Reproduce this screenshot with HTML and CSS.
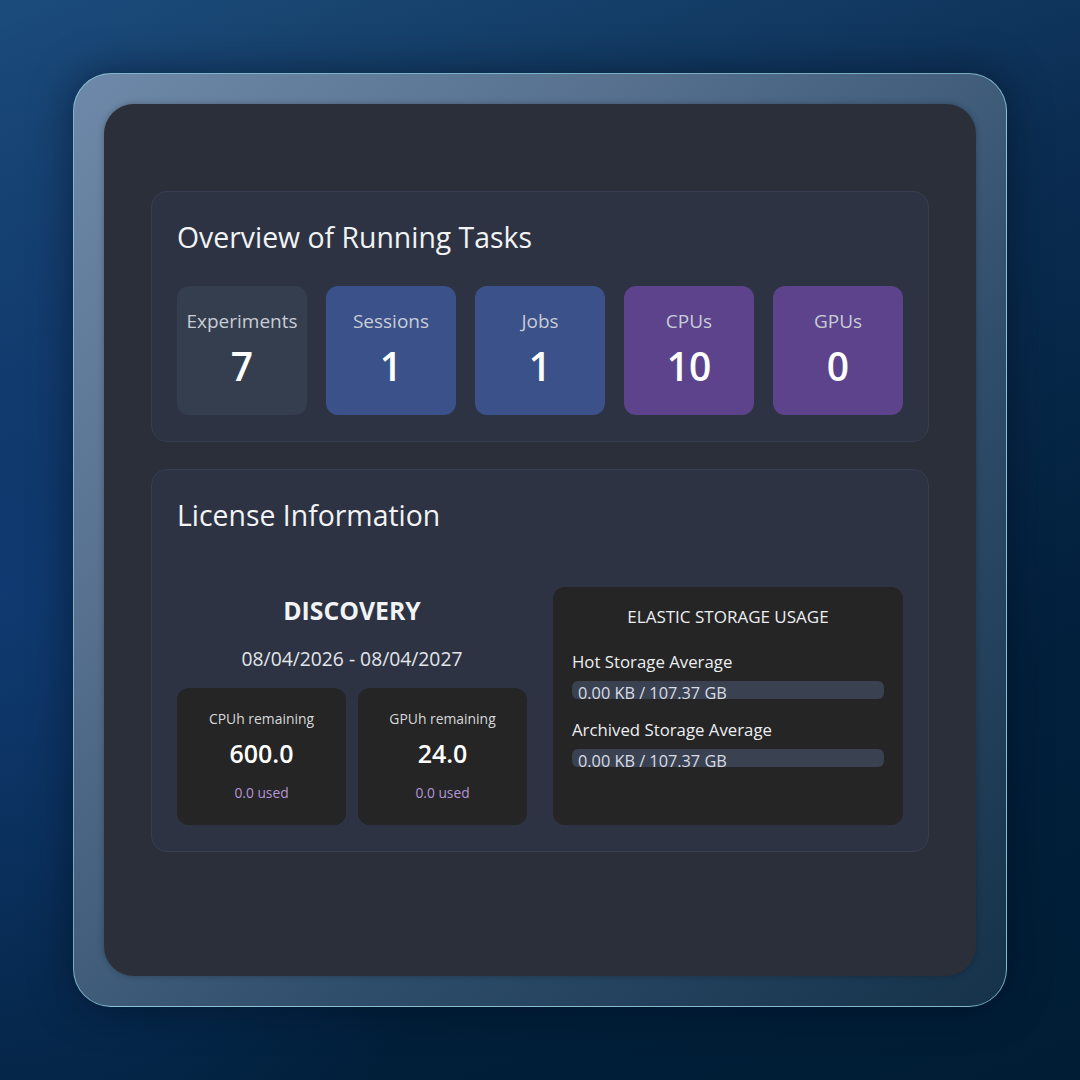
FILE: index.html
```html
<!DOCTYPE html>
<html lang="en">
<head>
  <meta charset="UTF-8">
  <meta name="viewport" content="width=device-width, initial-scale=1.0">
  <title>Dashboard</title>
  <link rel="stylesheet" href="styles.css">
</head>
<body>
  <div class="stage">
    <div class="frame">
      <div class="panel">

        <!-- Tareas en curso -->
        <section class="card">
          <h2 class="card-title">Overview of Running Tasks</h2>
          <div class="tiles">
            <div class="tile tile-gray">
              <span class="tile-label">Experiments</span>
              <span class="tile-value">7</span>
            </div>
            <div class="tile tile-blue">
              <span class="tile-label">Sessions</span>
              <span class="tile-value">1</span>
            </div>
            <div class="tile tile-blue">
              <span class="tile-label">Jobs</span>
              <span class="tile-value">1</span>
            </div>
            <div class="tile tile-purple">
              <span class="tile-label">CPUs</span>
              <span class="tile-value">10</span>
            </div>
            <div class="tile tile-purple">
              <span class="tile-label">GPUs</span>
              <span class="tile-value">0</span>
            </div>
          </div>
        </section>

        <!-- Licencia -->
        <section class="card">
          <h2 class="card-title">License Information</h2>
          <div class="license">
            <div class="plan">
              <h3 class="plan-name">DISCOVERY</h3>
              <p class="plan-dates">08/04/2026 - 08/04/2027</p>
              <div class="quotas">
                <div class="quota">
                  <span class="quota-label">CPUh remaining</span>
                  <span class="quota-value">600.0</span>
                  <span class="quota-used">0.0 used</span>
                </div>
                <div class="quota">
                  <span class="quota-label">GPUh remaining</span>
                  <span class="quota-value">24.0</span>
                  <span class="quota-used">0.0 used</span>
                </div>
              </div>
            </div>
            <div class="storage">
              <h4 class="storage-title">ELASTIC STORAGE USAGE</h4>
              <div class="storage-label">Hot Storage Average</div>
              <div class="bar">0.00 KB / 107.37 GB</div>
              <div class="storage-label">Archived Storage Average</div>
              <div class="bar">0.00 KB / 107.37 GB</div>
            </div>
          </div>
        </section>

      </div>
    </div>
  </div>
</body>
</html>
```

FILE: styles.css
```css
body {
  margin: 0;
  padding: 0;
  font-family: "Open Sans", "Noto Sans", sans-serif;
  color: #e9ebef;
}

.stage {
  width: 1080px;
  height: 1080px;
  display: flex;
  align-items: center;
  justify-content: center;
  background:
    radial-gradient(ellipse 520px 700px at 0% 55%, rgba(20, 70, 140, 0.55), rgba(20, 70, 140, 0) 100%),
    linear-gradient(160deg, #1c4c7a 0%, #0b2d52 35%, #02203c 70%, #001d35 100%);
}

.frame {
  width: 934px;
  height: 934px;
  box-sizing: border-box;
  padding: 30px;
  border-radius: 38px;
  border: 1.5px solid rgba(150, 215, 230, 0.75);
  background: linear-gradient(135deg, #6e89a9 0%, #56708e 30%, #2e4d6a 65%, #15324a 100%);
  box-shadow: 0 0 40px rgba(0, 10, 25, 0.5);
}

.panel {
  height: 100%;
  box-sizing: border-box;
  padding: 87px 47px;
  border-radius: 30px;
  background: #2a2f3a;
  box-shadow: 0 0 6px rgba(0, 0, 0, 0.25);
  display: flex;
  flex-direction: column;
  gap: 27px;
}

.card {
  background: #2d3343;
  border: 1px solid #373e50;
  border-radius: 16px;
  padding: 27px 25px 26px;
}

.card-title {
  margin: 0;
  font-size: 28.4px;
  font-weight: 500;
  line-height: 36px;
  color: #f2f3f5;
}

.tiles {
  margin-top: 31px;
  display: grid;
  grid-template-columns: repeat(5, 1fr);
  gap: 19px;
}

.tile {
  height: 129px;
  border-radius: 12px;
  display: flex;
  flex-direction: column;
  align-items: center;
  padding-top: 22px;
  box-sizing: border-box;
}

.tile-gray { background: #343e4f; }
.tile-blue { background: #3a5189; }
.tile-purple { background: #5c438b; }

.tile-label {
  font-size: 19px;
  line-height: 26px;
  color: #c8ccd6;
}

.tile-value {
  margin-top: 7px;
  font-size: 39px;
  font-weight: 600;
  line-height: 50px;
  color: #ffffff;
}

.license {
  margin-top: 54px;
  display: grid;
  grid-template-columns: 1fr 1fr;
  gap: 26px;
}

.plan {
  display: flex;
  flex-direction: column;
  justify-content: flex-end;
  align-items: center;
}

.plan-name {
  margin: 0;
  font-size: 24.8px;
  font-weight: 700;
  line-height: 32px;
  color: #f2f3f5;
}

.plan-dates {
  margin: 19px 0 15px;
  font-size: 19.3px;
  line-height: 28px;
  color: #e3e5ea;
}

.quotas {
  align-self: stretch;
  display: grid;
  grid-template-columns: 1fr 1fr;
  gap: 12px;
}

.quota {
  height: 137px;
  box-sizing: border-box;
  padding-top: 20px;
  border-radius: 12px;
  background: #252525;
  display: flex;
  flex-direction: column;
  align-items: center;
}

.quota-label {
  font-size: 13.9px;
  line-height: 22px;
  color: #d6d8dc;
}

.quota-value {
  margin-top: 7px;
  font-size: 25px;
  font-weight: 600;
  line-height: 32px;
  color: #ffffff;
}

.quota-used {
  margin-top: 14px;
  font-size: 13.8px;
  line-height: 20px;
  color: #b396d6;
}

.storage {
  background: #252525;
  border-radius: 12px;
  padding: 18px 19px 39px;
}

.storage-title {
  margin: 0 0 21px;
  text-align: center;
  font-size: 17px;
  font-weight: 400;
  line-height: 24px;
  color: #eceef1;
}

.storage-label {
  font-size: 16.8px;
  line-height: 24px;
  color: #eceef1;
}

.bar {
  margin: 7px 0 19px;
  height: 18px;
  border-radius: 6px;
  background: #3a4252;
  padding: 1px 0 0 6px;
  box-sizing: border-box;
  font-size: 16.3px;
  line-height: 22px;
  color: #d9dce2;
  white-space: nowrap;
}
```
